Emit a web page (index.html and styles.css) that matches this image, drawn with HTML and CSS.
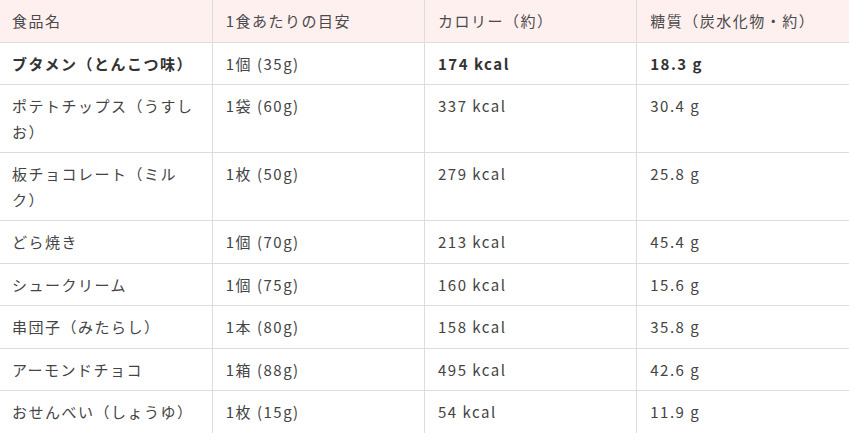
FILE: index.html
```html
<!DOCTYPE html>
<html lang="ja">
<head>
<meta charset="utf-8">
<link rel="stylesheet" href="styles.css">
</head>
<body>
<table class="food-table">
  <thead>
    <tr>
      <th>食品名</th>
      <th>1食あたりの目安</th>
      <th>カロリー（約）</th>
      <th>糖質（炭水化物・約）</th>
    </tr>
  </thead>
  <tbody>
    <tr class="highlight">
      <td>ブタメン（とんこつ味）</td>
      <td class="normal">1個 (35g)</td>
      <td>174 kcal</td>
      <td>18.3 g</td>
    </tr>
    <tr>
      <td>ポテトチップス（うすしお）</td>
      <td>1袋 (60g)</td>
      <td>337 kcal</td>
      <td>30.4 g</td>
    </tr>
    <tr>
      <td>板チョコレート（ミルク）</td>
      <td>1枚 (50g)</td>
      <td>279 kcal</td>
      <td>25.8 g</td>
    </tr>
    <tr>
      <td>どら焼き</td>
      <td>1個 (70g)</td>
      <td>213 kcal</td>
      <td>45.4 g</td>
    </tr>
    <tr>
      <td>シュークリーム</td>
      <td>1個 (75g)</td>
      <td>160 kcal</td>
      <td>15.6 g</td>
    </tr>
    <tr>
      <td>串団子（みたらし）</td>
      <td>1本 (80g)</td>
      <td>158 kcal</td>
      <td>35.8 g</td>
    </tr>
    <tr>
      <td>アーモンドチョコ</td>
      <td>1箱 (88g)</td>
      <td>495 kcal</td>
      <td>42.6 g</td>
    </tr>
    <tr>
      <td>おせんべい（しょうゆ）</td>
      <td>1枚 (15g)</td>
      <td>54 kcal</td>
      <td>11.9 g</td>
    </tr>
  </tbody>
</table>
</body>
</html>
```
FILE: styles.css
```css
html, body {
  margin: 0;
  padding: 0;
  background: #ffffff;
}
body {
  font-family: "Noto Sans CJK JP", "Noto Sans", sans-serif;
  color: #444444;
}
.food-table {
  width: 849px;
  border-collapse: collapse;
  table-layout: fixed;
  font-size: 15px;
  letter-spacing: 0.1em;
  line-height: 25.5px;
}
.food-table th,
.food-table td {
  text-align: left;
  vertical-align: top;
  padding: 8px 12px 8px 13px;
  border-left: 1px solid #dddddd;
  border-bottom: 1px solid #dddddd;
}
.food-table th:first-child,
.food-table td:first-child {
  border-left: none;
  padding-left: 12px;
}
.food-table th {
  font-weight: normal;
  background: #fff0f0;
  color: #4a4a4a;
  padding-top: 8px;
  padding-bottom: 8px;
}
.food-table .highlight td {
  font-weight: bold;
  color: #333333;
}
.food-table .highlight td.normal {
  font-weight: normal;
  color: #444444;
}
```
